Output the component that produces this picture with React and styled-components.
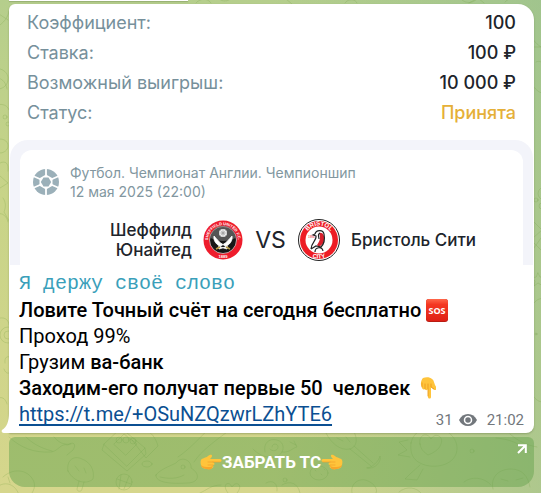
import React from 'react';
import styled, { createGlobalStyle } from 'styled-components';

const details = [
    { label: 'Коэффициент:', value: '100' },
    { label: 'Ставка:', value: '100 ₽' },
    { label: 'Возможный выигрыш:', value: '10 000 ₽' },
    { label: 'Статус:', value: 'Принята', accent: true },
];

const Doodles = () => (
    <Wallpaper viewBox="0 0 541 493" preserveAspectRatio="xMidYMid slice" aria-hidden="true">
        <g fill="none" stroke="#6f9a3c" strokeOpacity="0.22" strokeWidth="1" strokeLinecap="round" strokeLinejoin="round">
            {/* left edge */}
            <path d="M-4 12 8 20M0 25c5-4 8-8 9-14M-6 68c9 0 15 5 14 12s-7 10-14 9M-2 78c5 1 8 5 9 11M-3 105c6-2 11 1 12 5" />
            <circle cx="5" cy="117" r="2" />
            <circle cx="8" cy="124" r="2" />
            <path d="M0 139c5 0 8 3 8 7s-4 7-8 7M0 163c6-3 9 1 8 8M3 198c3 4 3 9 1 14l8 14M-3 214c6-2 10 3 11 8M0 176l8 7-8 5" />
            <circle cx="8" cy="335" r="8" />
            <circle cx="8" cy="335" r="4" />
            <path d="M0 318c6-1 9 3 9 7M5 363c-1-6 3-8 6-5M4 369c2 6 6 5 8 1M-2 398c5-2 8 2 9 6" />
            {/* top edge */}
            <path d="M196 3c4-5 12-5 15 0M218-2c4 4 9 4 14 0M345 3c3-5 11-4 12 0M286-1l6 5M462 0c5 4 11 3 15-1M469 3l9-5 6 5M505 2c4-4 8-5 13-4" />
            {/* right edge */}
            <path d="M529 30c2 8 6 13 12 17M534 47h8M536 62c3-2 6 0 8 3M533 86c4 5 7 7 10 7" />
            <circle cx="536" cy="200" r="2" />
            <circle cx="542" cy="206" r="3" />
            <path d="M541 188c-4 3-4 8 0 11M533 221l9 9-9 8M534 243l8 8M541 238l-7 10M538 273l2 4 5 1-3 3 1 5-5-3-4 3 1-5-3-3 4-1zM534 303c4-5 9-6 12-2M534 397c3 4 6 5 10 5" />
            <circle cx="536" cy="334" r="1" />
            {/* below the bubble */}
            <path d="M9 437c12 11 25 16 42 15 8-1 9-9 17-7 5-4 9-1 5 5l-6 5M26 437c6 6 14 11 26 14M54 437c5 6 10 8 17 7" />
            <path d="M104 444l17-16 24 20-18 18zM104 444l-2 6 25 21 19-17-1-6M114 444l10-10 13 10-11 11zM135 432c9-6 19 0 23 14l-12 12-14-18" />
            <circle cx="119" cy="440" r="3" />
            <circle cx="126" cy="440" r="3" />
            <circle cx="133" cy="441" r="3" />
            <ellipse cx="147" cy="464" rx="5" ry="3" />
            <path d="M68 471c-2-11 6-16 14-12 8 3 13 11 11 20-5 5-18 5-25-8zM79 481l-2 8c0 3 5 3 5 0l2-7M75 466l4 5M84 468l2 5" />
            <circle cx="124" cy="482" r="8" />
            <path d="M117 479l14 5M121 475l-2 14M129 476l-5 13" />
            <path d="M156 475c3-5 14-9 20-12 6-8 16-2 15 5 10 6 8 15-4 15-15 1-32 0-31-8zM160 477c9 2 17 2 24-2M178 457c12-8 22-20 30-27M194 462c7-11 22-22 36-32" />
            <circle cx="183" cy="467" r="2" />
            <path d="M200 493c7-3 11-8 21-8M265 452c-2-9 4-14 12-12s8 12 1 16c-8 4-20-1-25-7M272 447c0-4 6-4 6 0s-6 5-8 2M282 452c8 1 10-4 15-5l-3-6M290 442l6 3" />
            <path d="M326 433c5 10 14 18 24 16 9-3 7-14 2-20M337 438l6 3M346 437l4 5M350 449l21 17M354 446l19 17M367 468c5 0 12-7 13-12 2 5-5 14-13 12z" />
            <ellipse cx="319" cy="473" rx="9" ry="7" />
            <path d="M315 470l1 1M321 474l1 1M324 469l1 1" />
            <circle cx="285" cy="480" r="2" />
            <path d="M411 443c2-11 13-17 25-15 16 2 24 15 20 26-5 13-25 15-36 9-8-4-10-11-9-20zM408 440l-9 2 8 8-9 5 12 2M420 465l-10 9-5 5 12 1 6-11M420 444c-2-10 8-12 11-5 4-7 13-3 10 5-2 6-8 9-13 11-4-3-7-5-8-11z" />
            <circle cx="472" cy="451" r="2" />
            <path d="M496 438c13 1 24 5 34 15M510 434c8 7 16 11 27 13M352 493c-2-10 8-16 16-12 7 3 10 9 8 12M399 492c8-7 18-4 22 1M464 482c7-6 20-5 27 3M493 489c-3-12 6-20 18-20 11 0 17 7 19 18M501 479l7 2M516 480l7-2" />
            <path d="M3 477c12-11 27-6 31 5 2 6-2 12-6 16M-3 487c9-7 19-2 22 8M8 477l2 6M228 493c-7-9 1-13 4-6 4-7 12-2 5 6M266 483c7-4 12 1 11 8M282 485c8-5 16-2 18 8" />
        </g>
    </Wallpaper>
);

const BallIcon = () => (
    <svg width="28" height="28" viewBox="0 0 28 28" aria-hidden="true">
        <circle cx="14" cy="14" r="13" fill="#9bb0b9" />
        <path d="M14 6.500l6.500 3.750v7.500L14 21.500l-6.500-3.750v-7.500z" fill="#fff" />
        <path d="M14 0v8M14 20v8M1 8l8 3.500M27 8l-8 3.500M1 20l8-3.500M27 20l-8-3.500" stroke="#fff" strokeWidth="1.800" />
        <path d="M11.500 9.500h5L19.200 14l-2.700 4.500h-5L8.800 14z" fill="#9bb0b9" />
    </svg>
);

const SheffieldLogo = () => (
    <svg width="40" height="40" viewBox="0 0 40 40" role="img" aria-label="Шеффилд Юнайтед">
        <defs>
            <path id="sheffield-arc" d="M5.500 24a15 15 0 1 1 29 0" />
        </defs>
        <circle cx="20" cy="20" r="19.500" fill="#ee1c2c" />
        <circle cx="20" cy="20" r="13.500" fill="#171717" stroke="#f5dada" strokeWidth=".7" />
        <path d="M7.500 18a12.500 12.500 0 0 1 25 0c-8 4-17 4-25 0z" fill="#777" opacity=".65" />
        <text fill="#fff" fontFamily="Liberation Sans, sans-serif" fontSize="4" fontWeight="700">
            <textPath href="#sheffield-arc" startOffset="50%" textAnchor="middle">SHEFFIELD UNITED F.C.</textPath>
        </text>
        <circle cx="20" cy="13" r="4" fill="#eee" />
        <circle cx="20" cy="13" r="1.500" fill="#999" />
        <path d="M20 9v8M16 13h8M17 10l6 6M23 10l-6 6" stroke="#aaa" strokeWidth=".6" />
        <path d="M11 16c-1 6 4 11 13 13l1-2c-6-2-10-6-14-11zM29 16c1 6-4 11-13 13l-1-2c6-2 10-6 14-11z" fill="#fff" stroke="#fff" strokeWidth=".8" />
        <path d="M13 29l4-2M27 29l-4-2" stroke="#b79b42" strokeWidth="1.500" />
        <text x="20" y="38" fill="#fff" fontFamily="Liberation Sans, sans-serif" fontSize="4" fontWeight="700" textAnchor="middle">1889</text>
    </svg>
);

const BristolLogo = () => (
    <svg width="42" height="42" viewBox="0 0 42 42" role="img" aria-label="Бристоль Сити">
        <defs>
            <path id="bristol-top" d="M6.500 21a14.500 14.500 0 0 1 29 0" />
            <path id="bristol-bottom" d="M2.500 21a18.500 18.500 0 0 0 37 0" />
        </defs>
        <circle cx="21" cy="21" r="20.500" fill="#fff" stroke="#222" />
        <circle cx="21" cy="21" r="19" fill="#ed1c24" />
        <circle cx="21" cy="21" r="13.500" fill="#fff" />
        <g fill="#fff" fontFamily="Liberation Sans, sans-serif" fontSize="6" fontWeight="700">
            <text>
                <textPath href="#bristol-top" startOffset="50%" textAnchor="middle">BRISTOL</textPath>
            </text>
            <text>
                <textPath href="#bristol-bottom" startOffset="50%" textAnchor="middle">CITY</textPath>
            </text>
        </g>
        <text x="10" y="19" fill="#ed1c24" fontFamily="Liberation Sans, sans-serif" fontSize="3">1894</text>
        <path d="M21 14c4-1 6 3 5 7 0 4-3 5-5 7l-2-2c3-4 4-8 2-12z" fill="#d91f2c" />
        <path d="M17 15c1-4 8-5 9 0 1 5 1 9-3 13M17 15l-2 1 3 1c1 4-5 7-5 13M22 14c-3 1-1 4-1 6M17 33c0-5 7-6 8-1M13 30l5-3 5 1" fill="none" stroke="#222" strokeWidth="1.200" />
    </svg>
);

const SosEmoji = () => (
    <svg width="22" height="23" viewBox="0 0 22 23" role="img" aria-label="SOS">
        <defs>
            <linearGradient id="sos-fill" x2="0" y2="1">
                <stop stopColor="#ff684b" />
                <stop offset=".25" stopColor="#f43822" />
                <stop offset="1" stopColor="#df2016" />
            </linearGradient>
        </defs>
        <rect width="22" height="23" rx="3" fill="#b91c12" />
        <rect width="22" height="22" rx="3" fill="url(#sos-fill)" />
        <text x="11" y="15" fill="#fff" fontFamily="Open Sans, sans-serif" fontSize="9" fontWeight="700" textAnchor="middle">SOS</text>
    </svg>
);

const HandIcon = ({ flip }) => (
    <svg width="22" height="16" viewBox="0 0 22 16" aria-hidden="true">
        <g transform={flip ? 'translate(22 0) scale(-1 1)' : undefined}>
            <path d="M1 6c1-2 5-2 7-4 2-1 4-2 4 0 0 1-1 2-2 3h10c2 0 2 3 0 3h-7c2 1 2 3 0 3 1 2 0 3-1 3-1 2-7 1-9 0-2-1-3-6-2-8z" fill="#ffc43b" />
            <path d="M1 11c0 2 2 3 5 4 4 1 7 0 6-2 1 0 1-1 1-2-1 2-3 2-4 2-3 0-6 0-8-2z" fill="#f8a72a" />
            <path d="M8 8h5M8 11h5M13 8h7" fill="none" stroke="#f0a028" strokeWidth=".7" strokeLinecap="round" />
        </g>
    </svg>
);

const HandDown = () => (
    <svg width="16" height="22" viewBox="0 0 16 22" role="img" aria-label="вниз">
        <path d="M3 1c3-1 7-1 9 1 2 1 2 4 3 6 2 3 2 5 0 5-1 0-3-2-4-3v10c0 2-3 2-3 0v-8c-1 2-3 1-3 0-2 1-3 0-3-2-2-2-1-7 1-9z" fill="#ffc43b" />
        <path d="M8 7v12M5 7v5M2 6v4M11 7v3l3 2" fill="none" stroke="#ec9c1e" strokeWidth=".9" strokeLinecap="round" />
    </svg>
);

const EyeIcon = () => (
    <svg width="18" height="12" viewBox="0 0 18 12" aria-hidden="true">
        <path d="M0 6c2-4 5-6 9-6s7 2 9 6c-2 4-5 6-9 6S2 10 0 6z" fill="#72777c" />
        <circle cx="9" cy="6" r="3.500" fill="#72777c" stroke="#fff" strokeWidth="1.500" />
    </svg>
);

const App = () => (
    <>
        <GlobalStyle />
        <Chat>
            <Doodles />
            <PreviousBubble />
            <Message>
                <Slip>
                    <Details>
                        {details.map((item) => (
                            <DetailRow key={item.label}>
                                <dt>{item.label}</dt>
                                <DetailValue $accent={item.accent}>{item.value}</DetailValue>
                            </DetailRow>
                        ))}
                    </Details>
                    <MatchFrame>
                        <MatchCard>
                            <League>
                                <BallIcon />
                                <div>
                                    Футбол. Чемпионат Англии. Чемпионшип
                                    <br />
                                    12 мая 2025 (22:00)
                                </div>
                            </League>
                            <Teams>
                                <HomeTeam>
                                    Шеффилд
                                    <br />
                                    Юнайтед
                                </HomeTeam>
                                <SheffieldLogo />
                                <Versus>VS</Versus>
                                <BristolLogo />
                                <AwayTeam>Бристоль Сити</AwayTeam>
                            </Teams>
                        </MatchCard>
                    </MatchFrame>
                </Slip>
                <Caption>
                    <Mono>Я держу своё слово</Mono>
                    <Line>
                        <b>Ловите Точный счёт на сегодня бесплатно </b>
                        <SosEmoji />
                    </Line>
                    <Line>Проход 99%</Line>
                    <Line>
                        Грузим <b>ва-банк</b>
                    </Line>
                    <Line>
                        <b>Заходим-его получат первые 50  человек  </b>
                        <HandDown />
                    </Line>
                    <LastLine>
                        <a href="https://t.me/+OSuNZQzwrLZhYTE6">https://t.me/+OSuNZQzwrLZhYTE6</a>
                        <Meta>
                            <Views>
                                31
                                <EyeIcon />
                            </Views>
                            <time>21:02</time>
                        </Meta>
                    </LastLine>
                </Caption>
                <Tail viewBox="0 0 10 20" aria-hidden="true">
                    <path d="M10 0H8c0 8-2 14-7 17-1 1 0 3 2 3h7z" fill="#fff" />
                </Tail>
            </Message>
            <ActionButton type="button">
                <HandIcon />
                ЗАБРАТЬ ТС
                <HandIcon flip />
                <Corner viewBox="0 0 10 10" aria-hidden="true">
                    <path d="M1 1.200h7.800V9M8.500 1.500 1 9" fill="none" stroke="#fff" strokeWidth="2" />
                </Corner>
            </ActionButton>
        </Chat>
    </>
);

const GlobalStyle = createGlobalStyle`
    * {
        box-sizing: border-box;
    }
    body {
        margin: 0;
        font-family: Roboto, sans-serif;
    }
`;

const Chat = styled.main`
    position: relative;
    min-height: 100vh;
    padding: 0 7px 6px 9px;
    overflow: hidden;
    background:
        linear-gradient(90deg, transparent 50%, rgba(147, 190, 142, 0.6)),
        linear-gradient(180deg, #b5ce8c 0%, #c8d488 40%, #d6d68c 100%);
`;

const Wallpaper = styled.svg`
    position: absolute;
    inset: 0;
    width: 100%;
    height: 100%;
`;

const PreviousBubble = styled.div`
    position: relative;
    width: 34%;
    height: 1px;
    margin-bottom: 3px;
    background: #fff;
    box-shadow: 0 1px 1px rgba(90, 110, 60, 0.35);
`;

const Message = styled.article`
    position: relative;
    border-radius: 6px 16px 8px 0;
    background: #fff;
    box-shadow: 0 1px 2px rgba(90, 110, 60, 0.4);
`;

const Slip = styled.section`
    padding: 4px 1px 0;
    font-family: Inter, sans-serif;
    color: #20242b;
`;

const Details = styled.dl`
    margin: 0;
    padding: 0 17px 12px;
`;

const DetailRow = styled.div`
    display: flex;
    justify-content: space-between;
    font-size: 18px;
    line-height: 30px;

    dt {
        color: #76909b;
    }
`;

const DetailValue = styled.dd`
    margin: 0;
    font-weight: 500;
    color: ${({ $accent }) => ($accent ? '#e5b038' : '#20242b')};
`;

const MatchFrame = styled.div`
    padding: 10px 10px 0;
    border-radius: 18px 18px 0 0;
    background: #f3f4fa;
`;

const MatchCard = styled.div`
    padding: 13px 12px 4px;
    border-radius: 12px 12px 0 0;
    background: #fff;
`;

const League = styled.div`
    display: flex;
    align-items: center;
    gap: 10px;
    font-size: 14px;
    line-height: 19px;
    color: #82979f;
`;

const Teams = styled.div`
    display: grid;
    grid-template-columns: 1fr 40px 33px 42px 1fr;
    align-items: center;
    column-gap: 11px;
    margin-top: 18px;
    font-size: 17px;
    font-weight: 500;
    line-height: 20px;
`;

const HomeTeam = styled.div`
    text-align: right;
`;

const AwayTeam = styled.div`
    white-space: nowrap;
`;

const Versus = styled.div`
    font-size: 23px;
    font-weight: 400;
    text-align: center;
`;

const Caption = styled.div`
    padding: 6px 10px 6px;
    font-size: 20px;
    line-height: 26px;
    color: #000;

    b {
        font-weight: 500;
    }
`;

const Line = styled.div`
    display: flex;
    align-items: center;
    white-space: pre-wrap;
`;

const Mono = styled(Line)`
    font-family: 'Liberation Mono', monospace;
    color: #3a9fba;
`;

const LastLine = styled(Line)`
    justify-content: space-between;

    a {
        color: #0b4f92;
        text-decoration-thickness: 2px;
        text-underline-offset: 3px;
        text-decoration-skip-ink: none;
    }
`;

const Meta = styled.div`
    display: flex;
    align-items: center;
    gap: 10px;
    padding-top: 12px;
    font-size: 15px;
    line-height: 14px;
    color: #72777c;
`;

const Views = styled.span`
    display: flex;
    align-items: center;
    gap: 6px;
`;

const Tail = styled.svg`
    position: absolute;
    left: -8px;
    bottom: 0;
    width: 10px;
    height: 20px;
`;

const ActionButton = styled.button`
    position: relative;
    display: flex;
    align-items: center;
    justify-content: center;
    width: 100%;
    height: 50px;
    margin-top: 4px;
    padding: 0;
    border: 0;
    border-radius: 6px 6px 16px 16px;
    background: rgba(104, 163, 80, 0.5);
    font: 700 17px Roboto, sans-serif;
    color: #fff;
    cursor: pointer;
`;

const Corner = styled.svg`
    position: absolute;
    top: 7px;
    right: 7px;
    width: 10px;
    height: 10px;
`;

export default App;
